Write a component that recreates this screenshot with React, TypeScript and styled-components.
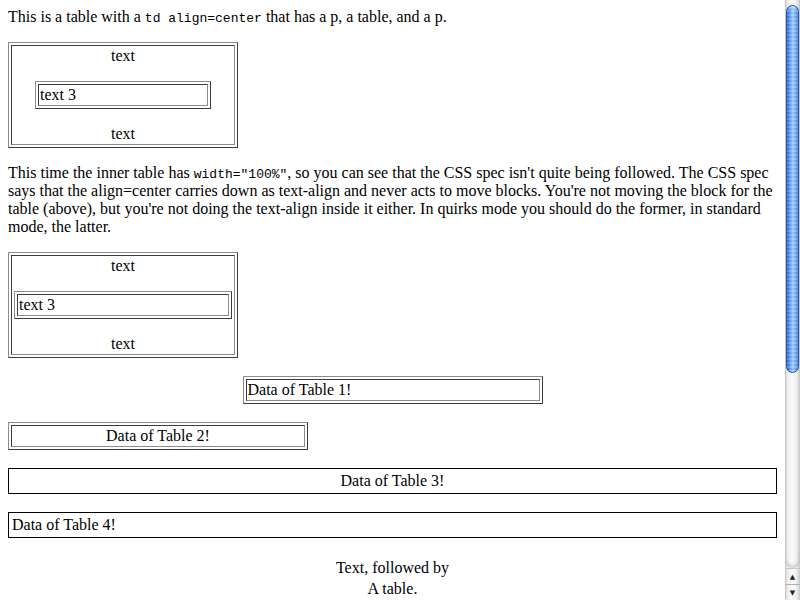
import React from "react";
import styled, { createGlobalStyle, css } from "styled-components";

const Global = createGlobalStyle`
  html, body { margin: 0; padding: 0; background: #fff; overflow: hidden; }
  body { font-family: "Liberation Serif", "Times New Roman", serif; font-size: 16px; line-height: 18px; color: #000; }
`;

const LIGHT = "#8c8c8c";
const DARK = "#3c3c3c";

const Viewport = styled.div`
  display: flex;
  width: 800px;
  height: 600px;
  overflow: hidden;
`;

const Content = styled.div`
  width: 785px;
  box-sizing: border-box;
  padding: 8px;
  display: flex;
  flex-direction: column;
  align-items: flex-start;
`;

const Para = styled.p<{ $gap?: number }>`
  margin: 0 0 ${(p) => p.$gap ?? 16}px;
  align-self: stretch;
`;

const Code = styled.code`
  font-family: "Liberation Mono", "Courier New", monospace;
  font-size: 13px;
  line-height: 13px;
`;

type Variant = "bevel" | "solid";

const Table = styled.div<{ $w: string; $variant?: Variant; $place?: "start" | "center"; $gap?: number }>`
  box-sizing: border-box;
  width: ${(p) => p.$w};
  padding: 2px;
  border: 1px solid;
  align-self: ${(p) => (p.$place === "center" ? "center" : "flex-start")};
  margin-bottom: ${(p) => p.$gap ?? 0}px;
  ${(p) =>
    p.$variant === "solid"
      ? css`border-color: #000;`
      : css`border-color: ${LIGHT} ${DARK} ${DARK} ${LIGHT};`}
`;

const Cell = styled.div<{ $variant?: Variant; $text?: "left" | "center"; $padX?: number }>`
  display: flex;
  flex-direction: column;
  align-items: stretch;
  padding: 1px ${(p) => p.$padX ?? 1}px;
  text-align: ${(p) => p.$text ?? "left"};
  ${(p) =>
    p.$variant === "solid"
      ? css`border: 0;`
      : css`border: 1px solid; border-color: ${DARK} ${LIGHT} ${LIGHT} ${DARK};`}
`;

const CellPara = styled.p<{ $gap?: number; $top?: number }>`
  margin: ${(p) => p.$top ?? 0}px 0 ${(p) => p.$gap ?? 0}px;
  text-align: center;
`;

const Centered = styled.div`
  align-self: stretch;
  text-align: center;
`;

const CenterLine = styled.div<{ $h: number }>`
  height: ${(p) => p.$h}px;
  line-height: ${(p) => p.$h}px;
`;

/* ---------- scrollbar ---------- */
const Scrollbar = styled.div`
  width: 15px;
  height: 600px;
  display: flex;
  flex-direction: column;
  background: linear-gradient(to right, #b9b9b9 0, #dcdcdc 1px, #efefef 3px, #fbfbfb 7px, #f1f1f1 11px, #d6d6d6 14px, #c4c4c4 15px);
`;

const Track = styled.div`
  flex: 1;
  display: flex;
  flex-direction: column;
  padding-top: 5px;
  border-radius: 0 0 8px 8px;
  box-shadow: inset 0 -4px 4px -2px rgba(0, 0, 0, 0.18);
`;

const Thumb = styled.div`
  margin: 0 1px;
  height: 368px;
  border-radius: 7px;
  border: 1px solid #1f52b0;
  box-sizing: border-box;
  background:
    repeating-linear-gradient(to bottom, rgba(255,255,255,0.12) 0 2px, rgba(0,0,0,0.05) 2px 4px),
    linear-gradient(to right, #2360d2 0, #4d8ef0 2px, #7fb6fa 4px, #a9d2fd 6px, #82b8f8 8px, #3f80e4 11px, #1f56c8 13px);
  box-shadow: inset 0 2px 2px rgba(255,255,255,0.4);
`;

const Arrow = styled.div<{ $top?: boolean }>`
  height: 15px;
  display: flex;
  align-items: center;
  justify-content: center;
  font-family: "DejaVu Sans", sans-serif;
  font-size: 7px;
  color: #222;
  border-top: ${(p) => (p.$top ? "1px solid #c8c8c8" : "1px solid #b0b0b0")};
`;

export default function App() {
  return (
    <>
      <Global />
      <Viewport>
        <Content>
          <Para>
            This is a table with a <Code>td align=center</Code> that has a p, a table, and a p.
          </Para>

          <Table $w="230px" $gap={16}>
            <Cell $padX={2}>
              <CellPara $gap={16}>text</CellPara>
              <Table $w="176px" $place="center">
                <Cell>text 3</Cell>
              </Table>
              <CellPara $top={16}>text</CellPara>
            </Cell>
          </Table>

          <Para>
            This time the inner table has <Code>width="100%"</Code>, so you can see that the CSS spec isn't quite
            being followed. The CSS spec says that the align=center carries down as text-align and never acts to
            move blocks. You're not moving the block for the table (above), but you're not doing the text-align
            inside it either. In quirks mode you should do the former, in standard mode, the latter.
          </Para>

          <Table $w="230px" $gap={18}>
            <Cell $padX={2}>
              <CellPara $gap={16}>text</CellPara>
              <Table $w="100%">
                <Cell>text 3</Cell>
              </Table>
              <CellPara $top={16}>text</CellPara>
            </Cell>
          </Table>

          <Table $w="300px" $place="center" $gap={18}>
            <Cell>Data of Table 1!</Cell>
          </Table>

          <Table $w="300px" $gap={18}>
            <Cell $text="center">Data of Table 2!</Cell>
          </Table>

          <Table $w="100%" $variant="solid" $gap={18}>
            <Cell $variant="solid" $text="center">Data of Table 3!</Cell>
          </Table>

          <Table $w="100%" $variant="solid" $gap={20}>
            <Cell $variant="solid">Data of Table 4!</Cell>
          </Table>

          <Centered>
            <CenterLine $h={20}>Text, followed by</CenterLine>
            <CenterLine $h={22}>A table.</CenterLine>
          </Centered>
        </Content>
        <Scrollbar>
          <Track>
            <Thumb />
          </Track>
          <Arrow $top>▲</Arrow>
          <Arrow>▼</Arrow>
        </Scrollbar>
      </Viewport>
    </>
  );
}
